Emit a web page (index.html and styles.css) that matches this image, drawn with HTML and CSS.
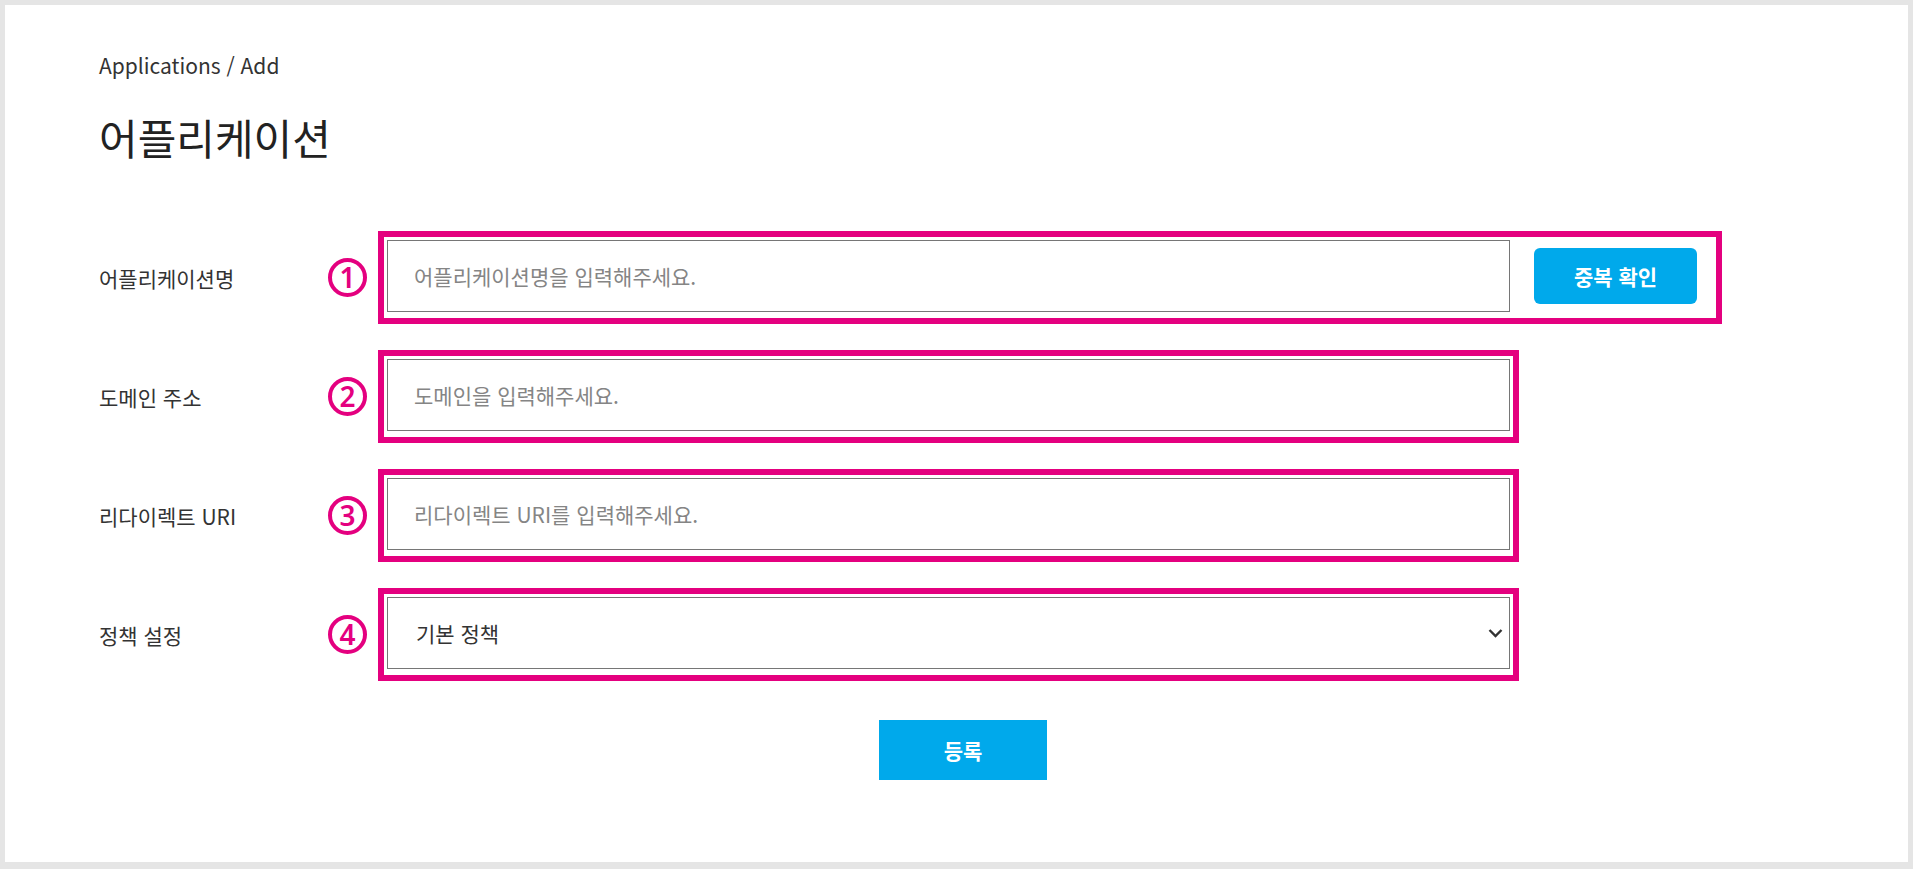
FILE: index.html
```html
<!DOCTYPE html>
<html lang="ko">
<head>
<meta charset="utf-8">
<title>Applications / Add</title>
<link rel="stylesheet" href="styles.css">
</head>
<body>
<div class="page">
  <div class="breadcrumb">Applications / Add</div>
  <h1 class="title">어플리케이션</h1>
  <form class="form">
    <div class="row">
      <label class="label">어플리케이션명</label>
      <span class="num">1</span>
      <div class="mark mark-wide">
        <input class="field" type="text" placeholder="어플리케이션명을 입력해주세요.">
        <button type="button" class="check-btn">중복 확인</button>
      </div>
    </div>
    <div class="row">
      <label class="label">도메인 주소</label>
      <span class="num">2</span>
      <div class="mark">
        <input class="field" type="text" placeholder="도메인을 입력해주세요.">
      </div>
    </div>
    <div class="row">
      <label class="label">리다이렉트 URI</label>
      <span class="num">3</span>
      <div class="mark">
        <input class="field" type="text" placeholder="리다이렉트 URI를 입력해주세요.">
      </div>
    </div>
    <div class="row">
      <label class="label">정책 설정</label>
      <span class="num">4</span>
      <div class="mark">
        <div class="select-wrap">
          <select class="field select">
            <option>기본 정책</option>
          </select>
          <svg class="chevron" width="15" height="10" viewBox="0 0 15 10"><path d="M1.5 2 L7.5 8 L13.5 2" fill="none" stroke="#333" stroke-width="2.4"/></svg>
        </div>
      </div>
    </div>
    <div class="submit-row">
      <button type="button" class="submit-btn">등록</button>
    </div>
  </form>
</div>
</body>
</html>
```

FILE: styles.css
```css
* { box-sizing: border-box; }
html, body { margin: 0; }
body {
  background: #e5e5e5;
  padding: 5px 5px 7px 5px;
  height: 869px;
  font-family: "Noto Sans CJK KR", "Noto Sans", sans-serif;
  color: #333;
}
.page {
  background: #fff;
  height: 857px;
  padding: 47px 0 0 94px;
}
.breadcrumb {
  font-size: 21px;
  line-height: 26px;
  color: #333;
}
.title {
  margin: 34px 0 0 0;
  font-size: 42px;
  line-height: 50px;
  font-weight: 400;
  color: #222;
}
.form {
  margin-top: 69px;
  display: flex;
  flex-direction: column;
  gap: 26px;
}
.row {
  display: flex;
  align-items: center;
  height: 93px;
}
.label {
  width: 229px;
  font-size: 21px;
  color: #333;
}
.num {
  width: 39px;
  height: 39px;
  border: 4px solid #e4007f;
  border-radius: 50%;
  color: #e4007f;
  font-size: 28px;
  font-weight: 600;
  line-height: 30px;
  text-align: center;
  margin-right: 11px;
  font-family: "Noto Sans", sans-serif;
}
.mark {
  border: 6px solid #e4007f;
  padding: 3px 3px 6px 3px;
  display: flex;
  align-items: center;
  width: 1141px;
  height: 93px;
}
.mark-wide {
  width: 1344px;
  padding-right: 19px;
}
.field {
  width: 1123px;
  height: 72px;
  border: 1px solid #767676;
  padding: 0 26px;
  font-family: "Noto Sans CJK KR", sans-serif;
  font-size: 21px;
  color: #333;
  background: #fff;
  outline: none;
  flex: none;
}
.field::placeholder { color: #858585; }
.check-btn {
  margin-left: 24px;
  width: 164px;
  height: 56px;
  border: none;
  border-radius: 6px;
  background: #00a9eb;
  color: #fff;
  font-family: "Noto Sans CJK KR", sans-serif;
  font-size: 21px;
  font-weight: 700;
}
.select-wrap {
  position: relative;
  width: 1123px;
  height: 72px;
}
.select {
  appearance: none;
  -webkit-appearance: none;
  padding-left: 28px;
  color: #333;
}
.chevron {
  position: absolute;
  right: 7px;
  top: 31px;
}
.submit-row {
  margin-top: 13px;
  padding-left: 780px;
}
.submit-btn {
  width: 168px;
  height: 60px;
  border: none;
  background: #00a9eb;
  color: #fff;
  font-family: "Noto Sans CJK KR", sans-serif;
  font-size: 21px;
  font-weight: 700;
}
```
